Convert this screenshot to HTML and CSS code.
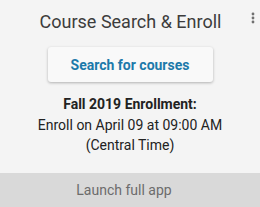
FILE: index.html
```html
<!DOCTYPE html>
<html>
<head>
<meta charset="utf-8">
<link rel="stylesheet" href="styles.css">
</head>
<body>
<div class="card">
  <header class="head">
    <h1 class="title">Course Search &amp; Enroll</h1>
    <button class="kebab" aria-label="More">
      <svg width="4" height="12" viewBox="0 0 4 12"><circle cx="2" cy="2" r="1.4"/><circle cx="2" cy="6" r="1.4"/><circle cx="2" cy="10" r="1.4"/></svg>
    </button>
  </header>
  <main class="body">
    <button class="search">Search for courses</button>
    <div class="info">
      <div class="term">Fall 2019 Enrollment:</div>
      <div>Enroll on April 09 at 09:00 AM</div>
      <div>(Central Time)</div>
    </div>
  </main>
  <footer class="foot">Launch full app</footer>
</div>
</body>
</html>
```
FILE: styles.css
```css
html, body {
  margin: 0;
  padding: 0;
}
body {
  background: #f4f4f4;
  font-family: Roboto, "Liberation Sans", sans-serif;
  width: 260px;
  height: 207px;
  overflow: hidden;
}
.card {
  display: flex;
  flex-direction: column;
  height: 207px;
}
.head {
  position: relative;
  padding-top: 11px;
  text-align: center;
}
.title {
  margin: 0;
  font-size: 18px;
  line-height: 22px;
  font-weight: 400;
  color: #3c3c3c;
  padding-left: 1px;
}
.kebab {
  position: absolute;
  top: 11px;
  left: 250px;
  width: 6px;
  height: 14px;
  padding: 1px;
  border: 0;
  background: none;
  fill: #707070;
  display: flex;
}
.body {
  display: flex;
  flex-direction: column;
  align-items: center;
}
.search {
  margin-top: 14px;
  width: 165px;
  height: 35px;
  border: 0;
  border-radius: 3px;
  background: #f9f9f9;
  box-shadow: 0 1px 3px rgba(0,0,0,0.28);
  font-family: Roboto, "Liberation Sans", sans-serif;
  font-size: 14px;
  font-weight: 700;
  color: #1c79aa;
  padding: 0;
}
.info {
  margin-top: 12px;
  text-align: center;
  font-size: 14px;
  line-height: 20.5px;
  color: #222;
}
.term {
  font-weight: 700;
}
.foot {
  margin-top: auto;
  height: 34px;
  line-height: 34px;
  background: #d9d9d9;
  text-align: center;
  font-size: 14px;
  color: #6c6c6c;
  padding-right: 12px;
}
```
